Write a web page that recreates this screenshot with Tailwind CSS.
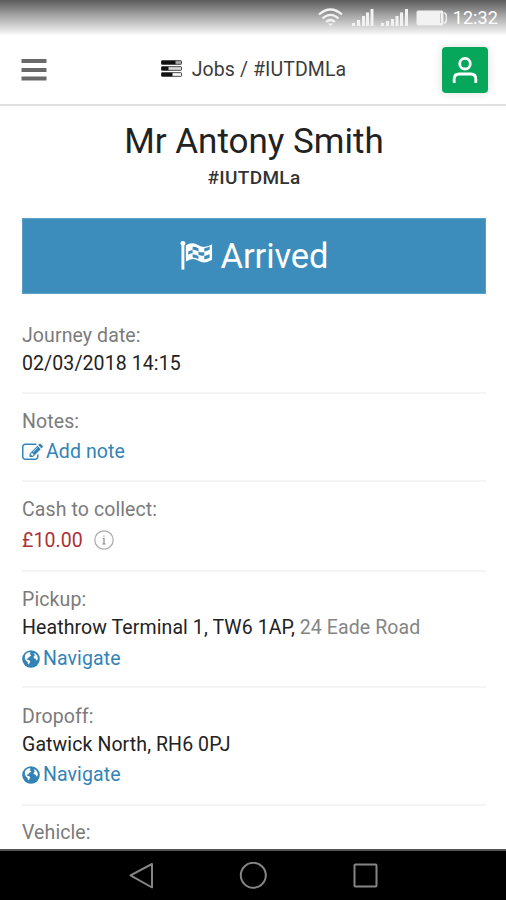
<!DOCTYPE html>
<html lang="en">
<head>
<meta charset="utf-8">
<title>Jobs / #IUTDMLa</title>
<script src="https://cdn.jsdelivr.net/npm/@tailwindcss/browser@4"></script>
</head>
<body class="bg-white">
<svg class="hidden">
  <symbol id="globe" viewBox="0 0 18 18">
    <circle cx="9" cy="9" r="8.800" fill="#3383b7"/>
    <path fill="#fff" d="M3 5L5 3l2.600-1 1 1-1.200 1.200 1.600.5-.2 1.200-1.800 1-1 1.600-1.400.3.600 1 1.600.2 1.500 1.300-.8 1.700-.8 1.400-.8-.6-.3-2L4.200 11 2.800 8.600zM11.500 3.600l1.700-.2 1.900 2.200.8 2.400-.5 2.100-1 .3-.7-1.600-1.600-.5-.6-1.400 1-1.300 1.300-.2-1.300-.7z"/>
  </symbol>
</svg>
<div class="flex h-[900px] w-[506px] flex-col overflow-hidden bg-white font-['Roboto',sans-serif] text-[19.5px] leading-7 tracking-[0.1px] text-[#222]">
  <div class="flex h-9 shrink-0 items-start justify-end bg-linear-to-b from-[#5c5c5c] via-[#a8a8a8] via-45% to-white pt-[7px] pr-2 text-white">
    <svg class="mt-px h-[19px] w-[25px]" viewBox="0 0 25 19" fill="none" stroke="#f2f2f2" stroke-width="2.200"><path d="M1 6.500Q12.500-3.500 24 6.500M4.500 10.300q8-7 16 0M8 14q4.500-4 9 0"/><path d="M9.800 15.500h5.400L12.500 18z" fill="#f2f2f2" stroke="none"/></svg>
    <svg class="ml-[9px] h-[19px] w-[22px]" viewBox="0 0 22 19" fill="#f2f2f2"><path d="M0 16h3v3H0zM5 13h3v6H5zM10 9h3v10h-3zM14 5.500h3V19h-3zM18.500 2h3v17h-3z"/></svg>
    <svg class="ml-[7px] h-[19px] w-[27px]" viewBox="0 0 27 19" fill="#f2f2f2"><path d="M0 16h3v3H0zM5 14h3v5H5zM10 12h3v7h-3zM14.500 9h3v10h-3zM19 5.500h3V19h-3zM24 2h3v17h-3z"/></svg>
    <svg class="mt-[3px] ml-2 h-[16px] w-[31px]" viewBox="0 0 31 16"><rect x="1" y="1" width="26" height="14" rx="1" fill="#f2f2f2" stroke="#eee"/><path d="M24.500 3v10" stroke="#c8c8c8"/><path d="M28 3q2.500 0 2.500 5T28 13" fill="none" stroke="#f2f2f2" stroke-width="1.500"/></svg>
    <span class="ml-[6px] text-[18px] leading-[22px]">12:32</span>
  </div>
  <header class="flex h-[70px] shrink-0 items-center justify-between border-b-2 border-[#e0e0e0] pr-[18px] pl-[21px]">
    <svg class="h-[22px] w-[26px]" viewBox="0 0 26 22" fill="#6a6a6a"><path d="M.5 0h25v4H.500zM.5 9h25v4H.500zM.5 17.500h25v4H.500z"/></svg>
    <div class="ml-[18px] flex items-center text-[19.5px] text-[#3c3c3c]">
      <svg class="mr-[10px] mb-[3px] h-[17px] w-[21px]" viewBox="0 0 21 17"><g fill="#aaa" stroke="#444"><rect x=".5" y=".7" width="20" height="3.600" rx=".6"/><rect x=".5" y="6.700" width="20" height="3.600" rx=".6" fill="#ddd"/><rect x=".5" y="12.700" width="20" height="3.600" rx=".6" fill="#fff"/></g><path fill="#111" d="M.5.700h14v3.600H.500zM.500 6.700h7v3.600h-7zM.500 12.700h11v3.600H.500z"/></svg>
      Jobs / #IUTDMLa
    </div>
    <div class="flex size-[46px] items-center justify-center rounded-[4px] bg-[#06a75a] shadow-[0_0_10px_#ddd]">
      <svg class="size-[28px]" viewBox="0 0 28 28" fill="none" stroke="#fff" stroke-width="2.800"><circle cx="14" cy="7.700" r="5.300"/><path d="M3.200 27v-4q0-5 5-5h11.600q5 0 5 5v4"/></svg>
    </div>
  </header>
  <main class="flex min-h-0 grow flex-col overflow-hidden pr-5 pl-[22px]">
    <h1 class="mt-[15px] text-center text-[35px] leading-[42px] tracking-normal">Mr Antony Smith</h1>
    <div class="mt-[2px] text-center text-[19px] font-medium leading-[26px] tracking-[0.35px] text-[#333]">#IUTDMLa</div>
    <button class="mt-[27px] flex h-[76px] shrink-0 items-center justify-center border border-[#5d9fc9] bg-[#3c8dbc] text-[34.5px] tracking-[-0.1px] text-white">
      <svg class="mr-[7px] mb-[2px] h-[31px] w-[34px]" viewBox="0 0 35 31"><circle cx="3" cy="3" r="2.500" fill="#fff"/><path d="M3 3v27" stroke="#fff" stroke-width="3"/><path fill="#fff" d="M6 5q7-4 13 0t14-1v16q-8 5-14 1t-13 1z"/><g fill="#3c8dbc"><path d="M13 6.500q3 0 6 1.500v3.300q-3-1.600-6-1.600zM8.500 11.500q2.500-1.500 4.500-1.600v3.400q-2 0-4.500 1.500zM19 11.300q3 1.300 6 .7v3.400q-3 .7-6-.7zM25 8q3-.5 5.500-1.700v3.400q-2.500 1.300-5.500 1.800zM13 14.300q3 0 6 1.600v3.300q-3-1.600-6-1.600zM25 16q3-.5 5.500-1.700v3.400q-2.500 1.300-5.500 1.800z"/></g></svg>
      <span>Arrived</span>
    </button>
    <section class="mt-[14px] h-[86px] shrink-0 border-b-2 border-[#f4f4f4] pt-[14px]">
      <div class="text-[#7b7b7b]">Journey date:</div>
      <div>02/03/2018 14:15</div>
    </section>
    <section class="h-[88px] shrink-0 border-b-2 border-[#f4f4f4] pt-[14px]">
      <div class="text-[#7b7b7b]">Notes:</div>
      <a class="mt-[2px] flex items-center text-[#3383b7]"><svg class="mr-[3px] h-[21px] w-[21px]" viewBox="0 0 1792 1792" fill="currentColor"><path d="M888 1184l116-116-152-152-116 116v56h96v96h56zm440-720q-16-16-33 1l-350 350q-17 17-1 33t33-1l350-350q17-17 1-33zm80 594v190q0 119-84.500 203.500t-203.500 84.500h-832q-119 0-203.500-84.500t-84.500-203.500v-832q0-119 84.500-203.500t203.500-84.500h832q63 0 117 25 15 7 18 23 3 17-9 29l-49 49q-14 14-32 8-23-6-45-6h-832q-66 0-113 47t-47 113v832q0 66 47 113t113 47h832q66 0 113-47t47-113v-126q0-13 9-22l64-64q15-15 35-7t20 29zm-96-738l288 288-672 672h-288v-288zm444 132l-92 92-288-288 92-92q28-28 68-28t68 28l152 152q28 28 28 68t-28 68z"/></svg>Add note</a>
    </section>
    <section class="h-[90px] shrink-0 border-b-2 border-[#f4f4f4] pt-[14px]">
      <div class="text-[#7b7b7b]">Cash to collect:</div>
      <div class="mt-[3px] flex items-center text-[#a93336]">£10.00<svg class="mb-[3px] ml-[11px] size-5" viewBox="0 0 20 20" fill="none" stroke="#aaa"><circle cx="10" cy="10" r="9.200" stroke-width="1.200"/><path d="M8.800 8.500H10v5.500M8.500 14h3M9.300 6h1.300" stroke="#888" stroke-width="1.200"/></svg></div>
    </section>
    <section class="h-[116px] shrink-0 border-b-2 border-[#f4f4f4] pt-[14px]">
      <div class="text-[#7b7b7b]">Pickup:</div>
      <div class="whitespace-nowrap">Heathrow Terminal 1, TW6 1AP, <span class="text-[#858585]">24 Eade Road</span></div>
      <a class="mt-[3px] flex items-center text-[#3383b7]"><svg class="mr-[3px] mb-px size-[18px]"><use href="#globe"/></svg>Navigate</a>
    </section>
    <section class="h-[118px] shrink-0 border-b-2 border-[#f4f4f4] pt-[15px]">
      <div class="text-[#7b7b7b]">Dropoff:</div>
      <div>Gatwick North, RH6 0PJ</div>
      <a class="mt-[2px] flex items-center text-[#3383b7]"><svg class="mr-[3px] mb-px size-[18px]"><use href="#globe"/></svg>Navigate</a>
    </section>
    <section class="shrink-0 pt-[13px]">
      <div class="text-[#7b7b7b]">Vehicle:</div>
    </section>
  </main>
  <nav class="flex h-[51px] shrink-0 items-center justify-center gap-[85px] border-t-2 border-[#555] bg-black">
    <svg class="size-7" viewBox="0 0 28 28" fill="none" stroke="#858585" stroke-width="2"><path d="M26 2v23.500L4.500 13.300z" stroke-linejoin="round"/></svg>
    <svg class="size-7" viewBox="0 0 28 28" fill="none" stroke="#858585" stroke-width="2"><circle cx="14.300" cy="13.300" r="12.500"/></svg>
    <svg class="size-7" viewBox="0 0 28 28" fill="none" stroke="#858585" stroke-width="2"><rect x="2.500" y="2.500" width="22" height="22" rx="1"/></svg>
  </nav>
</div>
</body>
</html>
